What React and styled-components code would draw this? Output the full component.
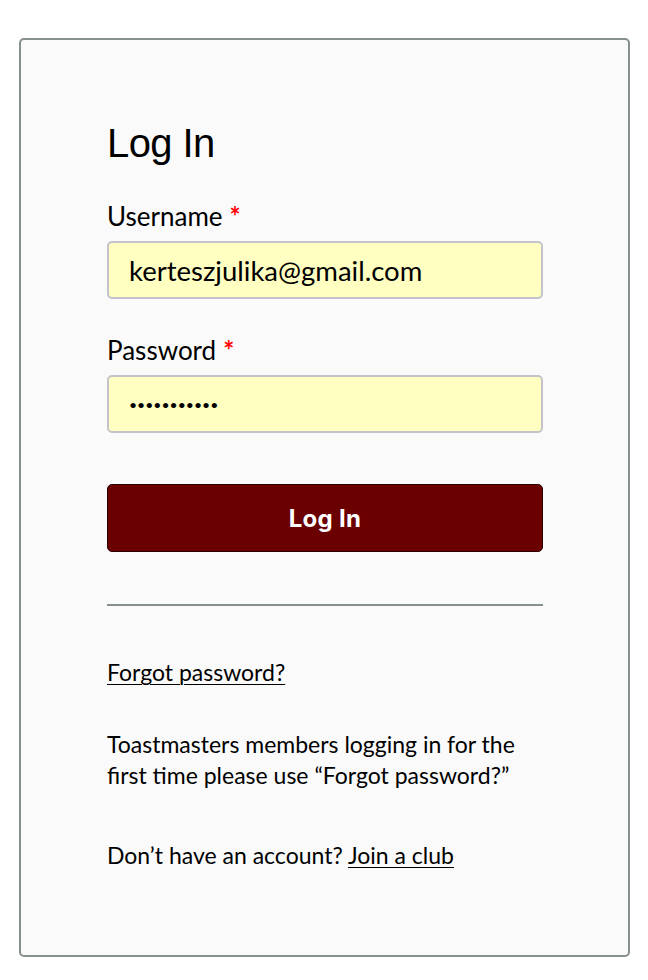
import React from "react";
import styled, { createGlobalStyle } from "styled-components";

const Global = createGlobalStyle`
  html, body { margin: 0; padding: 0; background: #ffffff; }
  body { font-family: "Lato", "Noto Sans", sans-serif; color: #000; }
  * { box-sizing: border-box; }
`;

const Page = styled.div`
  padding: 38px 18px 22px 19px;
`;

const Card = styled.div`
  border: 2px solid #86908f;
  border-radius: 5px;
  background: #fafafa;
  padding: 81px 85px 78px 86px;
  height: 919px;
  display: flex;
  flex-direction: column;
`;

const Title = styled.h1`
  margin: 0 0 36px;
  font-family: "Liberation Sans", Arial, sans-serif;
  font-weight: 400;
  font-size: 40px;
  line-height: 44px;
  letter-spacing: -0.6px;
`;

const Field = styled.div`
  display: flex;
  flex-direction: column;
  margin-bottom: ${(p) => p.$gap || 0}px;
`;

const Label = styled.label`
  font-size: 26px;
  line-height: 30px;
  margin-bottom: 10px;
`;

const Star = styled.span`
  color: #ff0000;
  font-weight: 700;
  margin-left: 7px;
`;

const Input = styled.input`
  width: 100%;
  height: 58px;
  border: 2px solid #c4c3cc;
  border-radius: 5px;
  background: #ffffc2;
  padding: 0 20px;
  font-family: "Lato", "Noto Sans", sans-serif;
  font-size: ${(p) => (p.type === "password" ? "14px" : "27.5px")};
  color: #000;
  outline: none;
`;

const Button = styled.button`
  margin-top: 51px;
  width: 100%;
  height: 68px;
  background: #6a0000;
  border: 1px solid #2b0000;
  border-radius: 5px;
  color: #fff;
  font-family: "Inter", "Liberation Sans", sans-serif;
  font-weight: 700;
  font-size: 24px;
  letter-spacing: 0.3px;
  cursor: pointer;
`;

const Rule = styled.hr`
  margin: 52px 0 0;
  border: 0;
  height: 2px;
  background: #86908f;
`;

const Link = styled.a`
  color: #000;
  text-decoration: underline;
  text-underline-offset: 3px;
  text-decoration-thickness: 1px;
`;

const Para = styled.p`
  margin: ${(p) => p.$top}px 0 0;
  font-size: 23px;
  line-height: 31px;
`;

export default function App() {
  return (
    <>
      <Global />
      <Page>
        <Card>
          <Title>Log In</Title>
          <Field $gap={36}>
            <Label>
              Username<Star>*</Star>
            </Label>
            <Input type="text" defaultValue="kerteszjulika@gmail.com" />
          </Field>
          <Field>
            <Label>
              Password<Star>*</Star>
            </Label>
            <Input type="password" defaultValue="abcdefghijk" />
          </Field>
          <Button>Log In</Button>
          <Rule />
          <Para $top={51}>
            <Link href="#">Forgot password?</Link>
          </Para>
          <Para $top={41}>
            Toastmasters members logging in for the
            <br />
            first time please use “Forgot password?”
          </Para>
          <Para $top={49}>
            Don’t have an account? <Link href="#">Join a club</Link>
          </Para>
        </Card>
      </Page>
    </>
  );
}
